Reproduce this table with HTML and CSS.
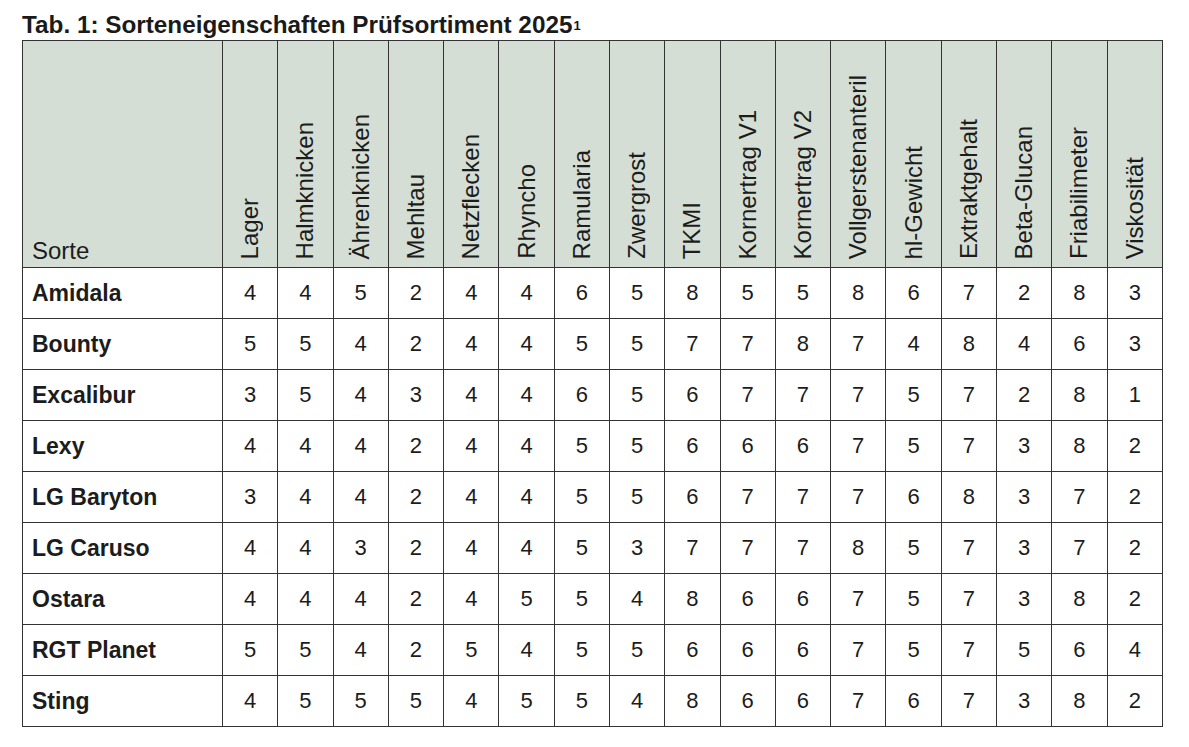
FILE: index.html
```html
<!DOCTYPE html>
<html lang="de">
<head>
<meta charset="utf-8">
<title>Tab. 1: Sorteneigenschaften Prüfsortiment 2025</title>
<link rel="stylesheet" href="styles.css">
</head>
<body>
<div class="page">
  <h1 class="title">Tab. 1: Sorteneigenschaften Prüfsortiment 2025<span class="fn">1</span></h1>
  <table class="grid">
    <colgroup>
      <col class="c-name">
      <col span="17">
    </colgroup>
    <thead>
      <tr class="head">
        <th class="h-name">Sorte</th>
        <th><span class="rot">Lager</span></th>
        <th><span class="rot">Halmknicken</span></th>
        <th><span class="rot">Ährenknicken</span></th>
        <th><span class="rot">Mehltau</span></th>
        <th><span class="rot">Netzflecken</span></th>
        <th><span class="rot">Rhyncho</span></th>
        <th><span class="rot">Ramularia</span></th>
        <th><span class="rot">Zwergrost</span></th>
        <th><span class="rot">TKMI</span></th>
        <th><span class="rot">Kornertrag V1</span></th>
        <th><span class="rot">Kornertrag V2</span></th>
        <th><span class="rot">Vollgerstenanteril</span></th>
        <th><span class="rot">hl-Gewicht</span></th>
        <th><span class="rot">Extraktgehalt</span></th>
        <th><span class="rot">Beta-Glucan</span></th>
        <th><span class="rot">Friabilimeter</span></th>
        <th><span class="rot">Viskosität</span></th>
      </tr>
    </thead>
    <tbody>
      <tr><td class="name">Amidala</td><td>4</td><td>4</td><td>5</td><td>2</td><td>4</td><td>4</td><td>6</td><td>5</td><td>8</td><td>5</td><td>5</td><td>8</td><td>6</td><td>7</td><td>2</td><td>8</td><td>3</td></tr>
      <tr><td class="name">Bounty</td><td>5</td><td>5</td><td>4</td><td>2</td><td>4</td><td>4</td><td>5</td><td>5</td><td>7</td><td>7</td><td>8</td><td>7</td><td>4</td><td>8</td><td>4</td><td>6</td><td>3</td></tr>
      <tr><td class="name">Excalibur</td><td>3</td><td>5</td><td>4</td><td>3</td><td>4</td><td>4</td><td>6</td><td>5</td><td>6</td><td>7</td><td>7</td><td>7</td><td>5</td><td>7</td><td>2</td><td>8</td><td>1</td></tr>
      <tr><td class="name">Lexy</td><td>4</td><td>4</td><td>4</td><td>2</td><td>4</td><td>4</td><td>5</td><td>5</td><td>6</td><td>6</td><td>6</td><td>7</td><td>5</td><td>7</td><td>3</td><td>8</td><td>2</td></tr>
      <tr><td class="name">LG Baryton</td><td>3</td><td>4</td><td>4</td><td>2</td><td>4</td><td>4</td><td>5</td><td>5</td><td>6</td><td>7</td><td>7</td><td>7</td><td>6</td><td>8</td><td>3</td><td>7</td><td>2</td></tr>
      <tr><td class="name">LG Caruso</td><td>4</td><td>4</td><td>3</td><td>2</td><td>4</td><td>4</td><td>5</td><td>3</td><td>7</td><td>7</td><td>7</td><td>8</td><td>5</td><td>7</td><td>3</td><td>7</td><td>2</td></tr>
      <tr><td class="name">Ostara</td><td>4</td><td>4</td><td>4</td><td>2</td><td>4</td><td>5</td><td>5</td><td>4</td><td>8</td><td>6</td><td>6</td><td>7</td><td>5</td><td>7</td><td>3</td><td>8</td><td>2</td></tr>
      <tr><td class="name">RGT Planet</td><td>5</td><td>5</td><td>4</td><td>2</td><td>5</td><td>4</td><td>5</td><td>5</td><td>6</td><td>6</td><td>6</td><td>7</td><td>5</td><td>7</td><td>5</td><td>6</td><td>4</td></tr>
      <tr><td class="name">Sting</td><td>4</td><td>5</td><td>5</td><td>5</td><td>4</td><td>5</td><td>5</td><td>4</td><td>8</td><td>6</td><td>6</td><td>7</td><td>6</td><td>7</td><td>3</td><td>8</td><td>2</td></tr>
    </tbody>
  </table>
</div>
</body>
</html>
```

FILE: styles.css
```css
html, body {
  margin: 0;
  padding: 0;
  background: #ffffff;
}

body {
  font-family: "Liberation Sans", Arial, sans-serif;
  color: #1c1c1c;
}

.page {
  display: flex;
  flex-direction: column;
  align-items: flex-start;
  padding: 12px 0 0 22px;
}

.title {
  margin: 0 0 2px 0;
  font-size: 24.3px;
  line-height: 26px;
  font-weight: bold;
  color: #1a1a1a;
}

.title .fn {
  font-size: 13px;
  vertical-align: top;
  position: relative;
  top: 1px;
  margin-left: 1px;
}

.grid {
  border-collapse: collapse;
  table-layout: fixed;
  width: 1141px;
}

.c-name {
  width: 200px;
}

.grid th,
.grid td {
  border: 1px solid #333333;
  padding: 0;
}

.head th {
  background: #d4ded5;
  height: 222px;
  vertical-align: bottom;
  text-align: center;
  font-weight: normal;
  font-size: 24px;
  line-height: 24px;
  color: #1c1c1c;
  padding-bottom: 4px;
}

.head th.h-name {
  text-align: left;
  padding-left: 9px;
  padding-bottom: 4px;
}

.rot {
  display: inline-block;
  writing-mode: vertical-rl;
  transform: rotate(180deg);
  white-space: nowrap;
}

.grid td {
  height: 50px;
  text-align: center;
  vertical-align: middle;
  font-size: 22px;
  line-height: 24px;
}

.grid td.name {
  text-align: left;
  padding-left: 9px;
  font-weight: bold;
  font-size: 23px;
}
```
